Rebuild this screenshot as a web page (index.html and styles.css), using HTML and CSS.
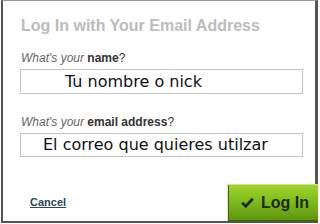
FILE: index.html
```html
<!DOCTYPE html>
<html>
<head>
	<title>Log In</title>
	<link rel="stylesheet" href="styles.css">
</head>
<body>
	<div class="dialog">
		<h1 class="title">Log In with Your Email Address</h1>

		<label class="field-label"><i>What's your</i> <b>name</b>?</label>
		<div class="field">Tu nombre o nick</div>

		<label class="field-label second"><i>What's your</i> <b>email address</b>?</label>
		<div class="field field-mail">El correo que quieres utilzar</div>

		<div class="footer">
			<a class="cancel" href="#">Cancel</a>
			<button class="login-btn">
				<svg width="13" height="11" viewBox="0 0 13 11"><path d="M1.2 5.8 L4.8 9.2 L11.8 1.8" fill="none" stroke="#1c2a08" stroke-width="2.8"/></svg>
				Log In
			</button>
		</div>
	</div>
</body>
</html>
```

FILE: styles.css
```css
body{
	margin: 0;
	background: #fff;
	font-family: "Liberation Sans", Arial, sans-serif;
}
*{
	box-sizing: border-box;
}
.dialog{
	width: 317px;
	height: 223px;
	margin-left: 1px;
	border: 2px solid #555;
	border-top: 1px solid #999;
	border-right-width: 3px;
	display: flex;
	flex-direction: column;
	padding: 0 0 0 17px;
}
.title{
	margin: 15px 0 0 1px;
	font-size: 16px;
	font-weight: bold;
	color: #bcbcbc;
	line-height: 20px;
}
.field-label{
	display: block;
	margin: 15px 0 0 1px;
	font-size: 12px;
	line-height: 14px;
	color: #333;
}
.field-label i{
	color: #666;
}
.field-label.second{
	margin-top: 21px;
}
.field{
	width: 283px;
	height: 25px;
	margin-top: 4px;
	border: 1px solid #c4c4c4;
	font-family: "DejaVu Sans", Verdana, sans-serif;
	font-size: 16px;
	line-height: 23px;
	color: #111;
	padding-left: 44px;
}
.field-mail{
	padding-left: 22px;
	height: 24px;
	line-height: 22px;
}
.footer{
	margin-top: auto;
	display: flex;
	align-items: center;
	justify-content: space-between;
	margin-right: -3px;
	margin-bottom: 1px;
}
.cancel{
	margin-left: 10px;
	font-size: 11px;
	font-weight: bold;
	color: #2c4560;
}
.login-btn{
	width: 89px;
	height: 36px;
	border: 0;
	border-top: 1px solid #c8ec6a;
	background: linear-gradient(#9fd52e, #78b21a 60%, #5f9510);
	box-shadow: -1px 1px 1px #3f5f0a;
	font-family: "Liberation Sans", Arial, sans-serif;
	font-size: 16px;
	font-weight: bold;
	color: #1c2a08;
	display: flex;
	align-items: center;
	gap: 7px;
	padding: 0 0 0 12px;
}
```
